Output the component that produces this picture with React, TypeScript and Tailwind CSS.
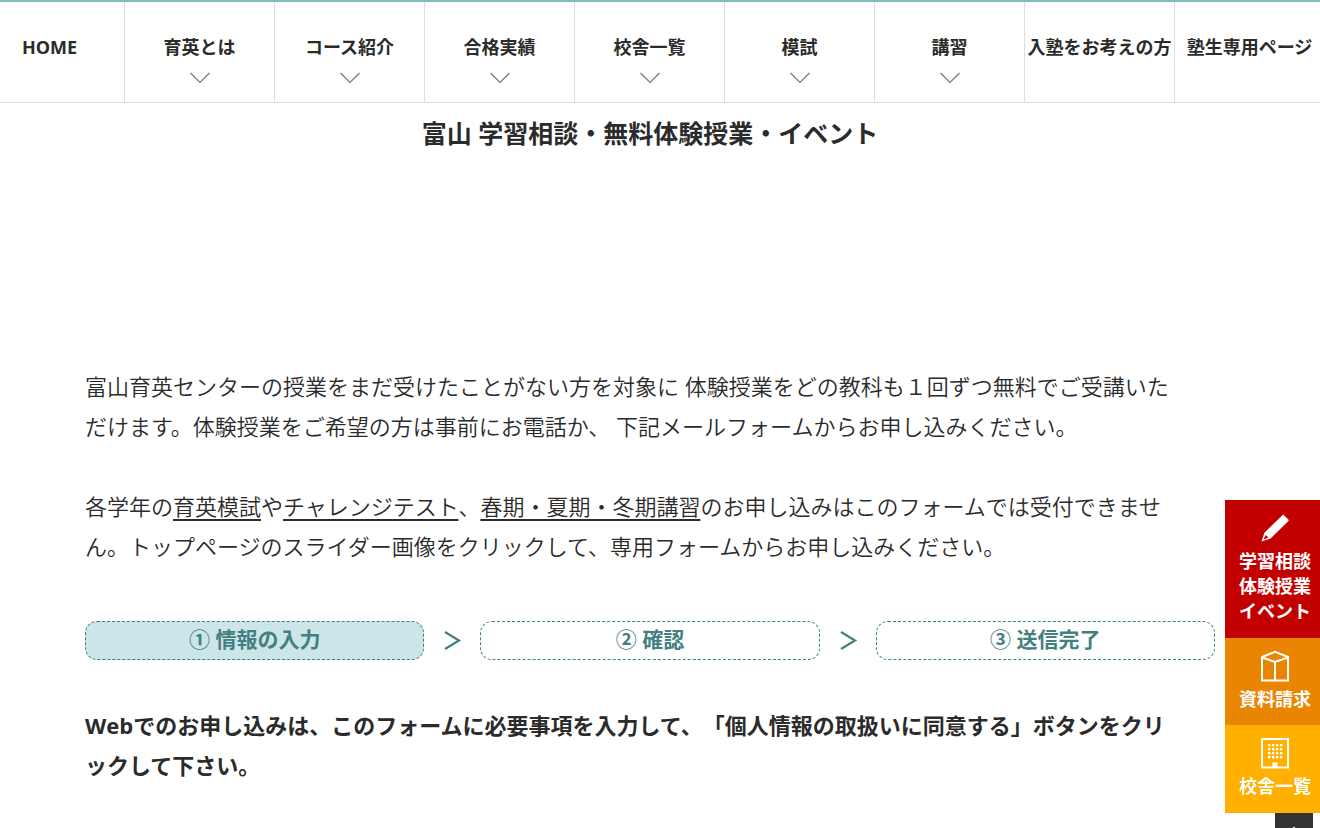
import { clsx } from "clsx";

type NavItem = { label: string; hasMenu?: boolean };

const navItems: NavItem[] = [
  { label: "HOME" },
  { label: "育英とは", hasMenu: true },
  { label: "コース紹介", hasMenu: true },
  { label: "合格実績", hasMenu: true },
  { label: "校舎一覧", hasMenu: true },
  { label: "模試", hasMenu: true },
  { label: "講習", hasMenu: true },
  { label: "入塾をお考えの方" },
  { label: "塾生専用ページ" },
];

const steps = ["① 情報の入力", "② 確認", "③ 送信完了"];

function Header() {
  return (
    <header className="overflow-hidden border-t-2 border-b border-t-[#80bdba] border-b-[#ddd] pr-5">
      <nav>
        <ul className="flex justify-center">
          {navItems.map((item) => (
            <li key={item.label} className="w-[150px] shrink-0 border-r border-[#ddd]">
              <a
                href="#"
                className="flex h-[100px] flex-col items-center pt-[31px] text-lg leading-7 font-bold whitespace-nowrap"
              >
                {item.label}
                {item.hasMenu && (
                  <svg className="mt-[11px] h-3 w-5" viewBox="0 0 20 12" fill="none" stroke="#777" strokeWidth={1.2}>
                    <path d="M0.5 1 L10 10.5 L19.5 1" />
                  </svg>
                )}
              </a>
            </li>
          ))}
        </ul>
      </nav>
    </header>
  );
}

function Steps() {
  return (
    <ol className="mt-[55px] flex text-[21px] leading-[34px] font-bold text-[#43807f]">
      {steps.map((step, i) => (
        <li key={step} className={clsx("flex", i === 0 ? "flex-[340]" : "flex-[396]")}>
          {i > 0 && (
            <svg className="h-[39px] w-14 shrink-0" viewBox="0 0 56 39" fill="none" stroke="currentColor" strokeWidth={2.2}>
              <path d="M21 11 L35 19.5 L21 28" />
            </svg>
          )}
          <span
            className={clsx(
              "h-[39px] flex-1 rounded-xl border border-dashed border-[#43807f] text-center",
              i === 0 && "bg-[#cce5e8]"
            )}
          >
            {step}
          </span>
        </li>
      ))}
    </ol>
  );
}

function PencilIcon() {
  return (
    <svg className="h-8 w-8" viewBox="0 0 32 32" fill="#fff">
      <path d="M23.4 3.2 Q24.2 2.4 25 3.2 L29.4 7.4 Q30.1 8.2 29.4 9 L11.6 26.6 L2.4 29.6 L5.6 20.6 Z" />
      <path d="M6.6 23 L9.4 25.6 L5.4 27.2 L4.9 26.7 Z" fill="#c30000" />
    </svg>
  );
}

function BoxIcon() {
  return (
    <svg className="h-8 w-8" viewBox="0 0 32 32" fill="none" stroke="#fff" strokeWidth={2}>
      <path d="M3 7 L16 1.8 L29 7 V30.5 H3 Z" />
      <path d="M3 7.5 L16 12 L29 7.5 M16 12 V30.5" />
    </svg>
  );
}

function BuildingIcon() {
  return (
    <svg className="h-8 w-8" viewBox="0 0 32 32" fill="#fff">
      <rect x="3" y="2" width="26" height="28.5" fill="none" stroke="#fff" strokeWidth={2} />
      {[7, 11, 15, 19].map((y) =>
        [9, 13, 17, 21].map((x) => <rect key={`${x}-${y}`} x={x} y={y} width="2.4" height="2.4" />)
      )}
      <rect x="13.5" y="25.5" width="5" height="5" />
    </svg>
  );
}

function SideMenu() {
  const link = "flex flex-col items-center pl-[5px] pt-3 text-lg leading-[25px] font-bold text-white";
  return (
    <aside className="fixed top-[500px] right-0 flex w-[95px] flex-col">
      <a href="#" className={clsx(link, "h-[138px] bg-[#c30000]")}>
        <PencilIcon />
        <span className="mt-[5px]">
          学習相談
          <br />
          体験授業
          <br />
          イベント
        </span>
      </a>
      <a href="#" className={clsx(link, "h-[87px] bg-[#e98500]")}>
        <BoxIcon />
        <span className="mt-[5px]">資料請求</span>
      </a>
      <a href="#" className={clsx(link, "h-[88px] bg-[#ffb000]")}>
        <BuildingIcon />
        <span className="mt-[5px]">校舎一覧</span>
      </a>
      <button type="button" aria-label="ページトップへ" className="mr-[7px] h-[38px] w-[38px] self-end bg-[#333]">
        <svg className="mx-auto h-4 w-4" viewBox="0 0 16 16" fill="none" stroke="#fff" strokeWidth={2}>
          <path d="M3 9 L8 4 L13 9" />
        </svg>
      </button>
    </aside>
  );
}

export default function App() {
  return (
    <div
      lang="ja"
      className="min-h-screen bg-white font-['Open_Sans','Noto_Sans_CJK_JP',sans-serif] text-[#2b2b2b] [text-spacing-trim:space-all]"
    >
      <Header />
      <main className="pr-5 pb-10">
        <h1 className="pt-[10px] text-center text-[25px] leading-10 font-bold">
          富山 学習相談・無料体験授業・イベント
        </h1>
        <div className="mx-auto mt-[213px] max-w-[1130px] text-[22px] leading-10">
          <p className="pr-10 font-[350]">
            富山育英センターの授業をまだ受けたことがない方を対象に 体験授業をどの教科も１回ずつ無料でご受講いただけます。体験授業をご希望の方は事前にお電話か、 下記メールフォームからお申し込みください。
          </p>
          <p className="mt-10 pr-10 font-[350]">
            各学年の
            <a href="#" className="underline decoration-2 underline-offset-4">育英模試</a>
            や
            <a href="#" className="underline decoration-2 underline-offset-4">チャレンジテスト</a>
            、
            <a href="#" className="underline decoration-2 underline-offset-4">春期・夏期・冬期講習</a>
            のお申し込みはこのフォームでは受付できません。トップページのスライダー画像をクリックして、専用フォームからお申し込みください。
          </p>
          <Steps />
          <p className="mt-[45px] pr-10 font-bold">
            Webでのお申し込みは、このフォームに必要事項を入力して、「個人情報の取扱いに同意する」ボタンをクリックして下さい。
          </p>
        </div>
      </main>
      <SideMenu />
    </div>
  );
}
